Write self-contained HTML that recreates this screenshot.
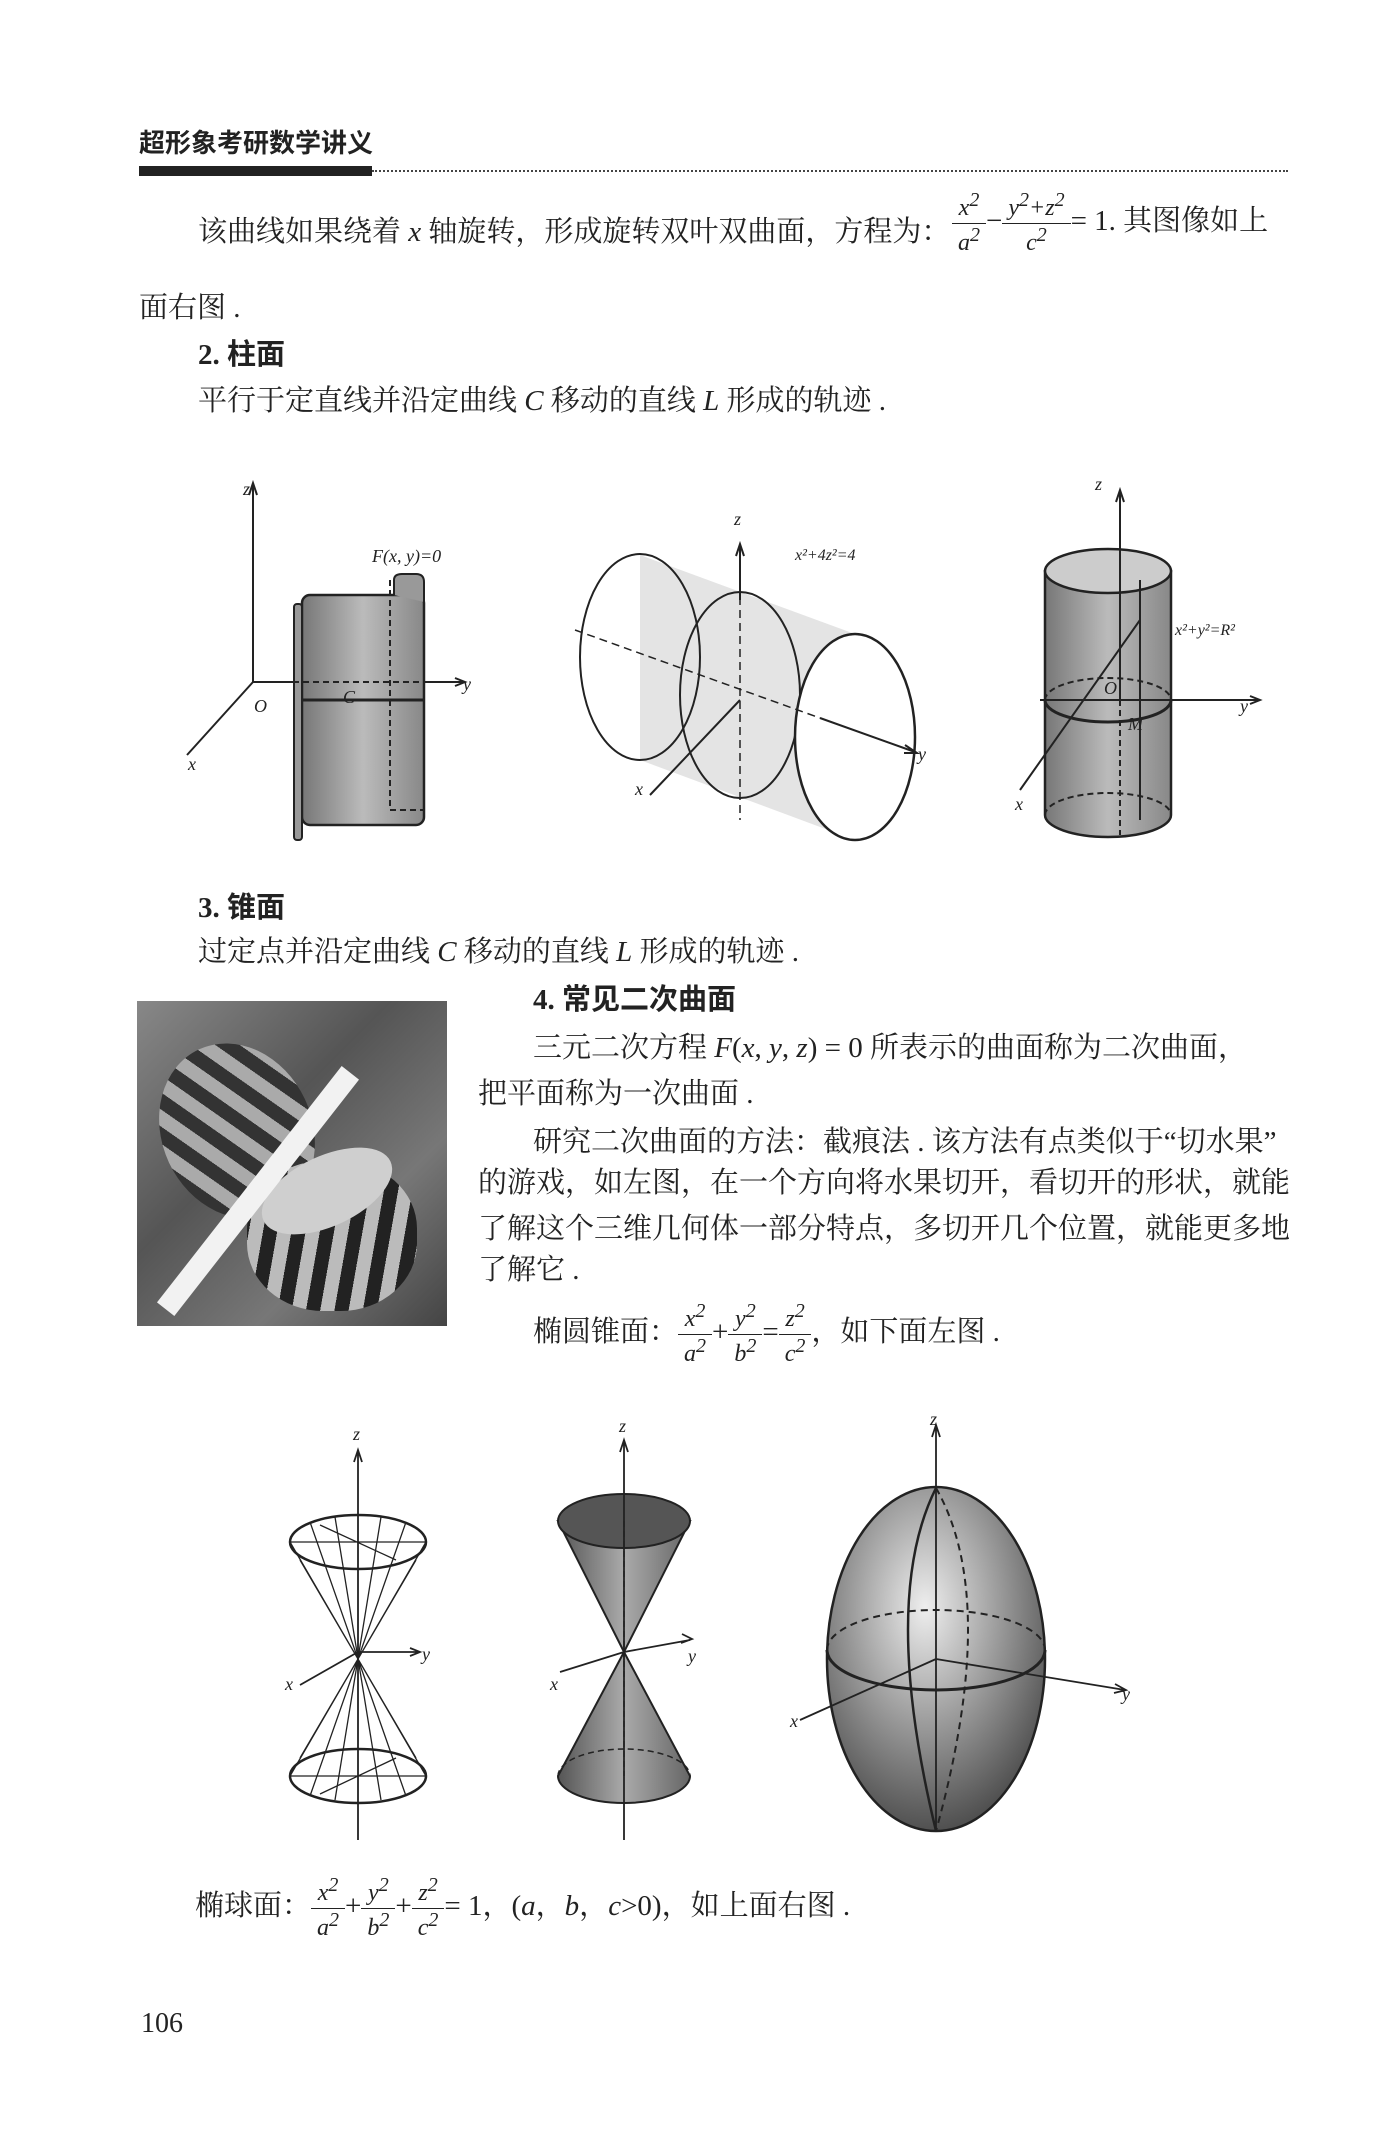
<!DOCTYPE html>
<html><head><meta charset="utf-8"><style>
body{margin:0;background:#fff;}
#p{position:relative;width:1399px;height:2152px;overflow:hidden;background:#fff;font-family:"Liberation Serif","Noto Serif CJK SC",serif;color:#222;}
.t{position:absolute;font-size:29px;white-space:nowrap;line-height:1;}
.b{font-weight:bold;font-family:"Liberation Serif","Noto Sans CJK SC",sans-serif;}
i{font-style:italic;}
.fr{display:inline-block;vertical-align:middle;text-align:center;font-size:24px;font-style:italic;line-height:1.15;}
.fr span{display:block;padding:0 6px;}
.fr .n{border-bottom:1.5px solid #222;}
svg{position:absolute;left:0;top:0;}
</style></head><body><div id="p">
<div class="t b" style="left:139px;top:131px;font-size:26px;">超形象考研数学讲义</div>
<div style="position:absolute;left:139px;top:166px;width:233px;height:10px;background:#222;"></div>
<div style="position:absolute;left:372px;top:170px;width:916px;border-top:2px dotted #444;"></div>

<div class="t" style="left:198px;top:218px;">该曲线如果绕着 <i>x</i> 轴旋转，形成旋转双叶双曲面，方程为：</div>
<div class="t" style="left:952px;top:189px;"><span class="fr"><span class="n">x<sup>2</sup></span><span>a<sup>2</sup></span></span>−<span class="fr"><span class="n">y<sup>2</sup>+z<sup>2</sup></span><span>c<sup>2</sup></span></span>= 1. 其图像如上</div>
<div class="t" style="left:139px;top:294px;">面右图 .</div>
<div class="t b" style="left:198px;top:341px;">2. 柱面</div>
<div class="t" style="left:198px;top:387px;">平行于定直线并沿定曲线 <i>C</i> 移动的直线 <i>L</i> 形成的轨迹 .</div>

<svg width="1399" height="2152" viewBox="0 0 1399 2152" font-family="Liberation Serif" font-style="italic" font-size="18" fill="none" stroke="#222">
<defs>
<linearGradient id="g1" x1="0" x2="1"><stop offset="0" stop-color="#777"/><stop offset=".5" stop-color="#bbb"/><stop offset="1" stop-color="#888"/></linearGradient>
<linearGradient id="g2" x1="0" x2="1"><stop offset="0" stop-color="#555"/><stop offset=".5" stop-color="#aaa"/><stop offset="1" stop-color="#666"/></linearGradient>
<radialGradient id="g3" cx=".45" cy=".35" r=".7"><stop offset="0" stop-color="#eee"/><stop offset=".5" stop-color="#999"/><stop offset="1" stop-color="#444"/></radialGradient>
</defs>
<path d="M253 682V485M249 495l4-12 4 12" stroke-width="2"/>
<path d="M253 682H465M455 678l10 4-10 4" stroke-width="2"/>
<path d="M253 682L187 755" stroke-width="2"/>
<rect x="302" y="595" width="122" height="230" rx="8" fill="url(#g1)" stroke-width="2.5"/>
<rect x="294" y="604" width="8" height="236" rx="3" fill="#999" stroke-width="2"/>
<path d="M394 595V580q0-6 8-6h14q8 0 8 8v20" fill="#999" stroke-width="2"/>
<path d="M302 700H424" stroke-width="3"/>
<path d="M390 580V810h34M253 682H424" stroke-dasharray="6 4" stroke-width="2"/>
<g fill="#222" stroke="none"><text x="243" y="495">z</text><text x="254" y="712">O</text><text x="343" y="703">C</text><text x="463" y="690">y</text><text x="188" y="770">x</text><text x="372" y="562">F(x, y)=0</text></g>
<path d="M640 555L855 634A61 103 0 0 1 855 840L640 760Z" fill="#ddd" stroke="none" opacity=".8"/>
<ellipse cx="640" cy="657" rx="60" ry="103" stroke-width="2"/>
<ellipse cx="740" cy="695" rx="60" ry="103" stroke-width="2"/>
<ellipse cx="855" cy="737" rx="60" ry="103" fill="#fff" stroke-width="2.5"/>
<path d="M740 545V820M575 630L820 718" stroke-dasharray="8 5" stroke-width="1.5"/>
<path d="M740 600V545M736 556l4-12 4 12M820 718L915 752M905 745l12 8-13 0M740 700L650 795" stroke-width="2"/>
<g fill="#222" stroke="none"><text x="734" y="525">z</text><text x="795" y="560" font-size="16">x²+4z²=4</text><text x="918" y="760">y</text><text x="635" y="795">x</text></g>
<path d="M1045 571V815A63 22 0 0 0 1171 815V571Z" fill="url(#g1)" stroke-width="2.5"/>
<ellipse cx="1108" cy="571" rx="63" ry="22" fill="#ccc" stroke-width="2.5"/>
<path d="M1120 700V490M1116 502l4-12 4 12M1040 700H1260M1250 696l10 4-10 4M1140 620L1020 790" stroke-width="2"/>
<path d="M1045 700A63 22 0 0 0 1171 700" stroke-width="3"/>
<path d="M1045 700A63 22 0 0 1 1171 700M1045 815A63 22 0 0 1 1171 815M1120 700V835" stroke-dasharray="6 4" stroke-width="2"/>
<path d="M1140 580V820" stroke-width="2"/>
<g fill="#222" stroke="none"><text x="1095" y="490">z</text><text x="1175" y="635" font-size="16">x²+y²=R²</text><text x="1240" y="712">y</text><text x="1104" y="694">O</text><text x="1128" y="730">M</text><text x="1015" y="810">x</text></g>
</svg>

<div class="t b" style="left:198px;top:894px;">3. 锥面</div>
<div class="t" style="left:198px;top:938px;">过定点并沿定曲线 <i>C</i> 移动的直线 <i>L</i> 形成的轨迹 .</div>

<div style="position:absolute;left:137px;top:1001px;width:310px;height:325px;background:linear-gradient(135deg,#888,#555 40%,#777 70%,#444);overflow:hidden;">
<div style="position:absolute;left:25px;top:40px;width:150px;height:180px;border-radius:50%;background:repeating-linear-gradient(60deg,#333 0 14px,#aaa 14px 28px);transform:rotate(-25deg);"></div>
<div style="position:absolute;left:110px;top:160px;width:170px;height:150px;border-radius:45%;background:repeating-linear-gradient(100deg,#222 0 14px,#bbb 14px 28px);"></div>
<div style="position:absolute;left:120px;top:155px;width:140px;height:70px;border-radius:50%;background:#cfcfcf;transform:rotate(-25deg);"></div>
<div style="position:absolute;left:110px;top:40px;width:22px;height:300px;background:#f2f2f2;transform:rotate(38deg);"></div>
</div>

<div class="t b" style="left:533px;top:986px;">4. 常见二次曲面</div>
<div class="t" style="left:533px;top:1034px;">三元二次方程 <i>F</i>(<i>x</i>, <i>y</i>, <i>z</i>) = 0 所表示的曲面称为二次曲面，</div>
<div class="t" style="left:478px;top:1080px;">把平面称为一次曲面 .</div>
<div class="t" style="left:533px;top:1128px;">研究二次曲面的方法：截痕法 . 该方法有点类似于“切水果”</div>
<div class="t" style="left:478px;top:1169px;">的游戏，如左图，在一个方向将水果切开，看切开的形状，就能</div>
<div class="t" style="left:478px;top:1215px;">了解这个三维几何体一部分特点，多切开几个位置，就能更多地</div>
<div class="t" style="left:478px;top:1256px;">了解它 .</div>
<div class="t" style="left:533px;top:1300px;">椭圆锥面：<span class="fr"><span class="n">x<sup>2</sup></span><span>a<sup>2</sup></span></span>+<span class="fr"><span class="n">y<sup>2</sup></span><span>b<sup>2</sup></span></span>=<span class="fr"><span class="n">z<sup>2</sup></span><span>c<sup>2</sup></span></span>，如下面左图 .</div>

<svg width="1399" height="2152" viewBox="0 0 1399 2152" font-family="Liberation Serif" font-style="italic" font-size="18" fill="none" stroke="#222">
<path d="M358 1450V1840M354 1462l4-12 4 12M358 1652H420M410 1648l10 4-10 4M358 1652L300 1685" stroke-width="1.8"/>
<ellipse cx="358" cy="1542" rx="68" ry="27" stroke-width="2.5"/>
<ellipse cx="358" cy="1776" rx="68" ry="27" stroke-width="2.5"/>
<path d="M290 1542L426 1776M426 1542L290 1776M310 1522L406 1796M406 1522L310 1796M335 1517L381 1800M381 1517L335 1800M300 1560L416 1758M416 1560L300 1758M290 1542H426M290 1776H426M320 1525L396 1560M320 1794L396 1758" stroke-width="1.3"/>
<g fill="#222" stroke="none"><text x="353" y="1440">z</text><text x="422" y="1660">y</text><text x="285" y="1690">x</text></g>
<path d="M558 1521L624 1652L690 1521Z" fill="url(#g2)" stroke-width="2"/>
<ellipse cx="624" cy="1521" rx="66" ry="27" fill="#555" stroke-width="2"/>
<path d="M624 1652L558 1776A66 27 0 0 0 690 1776Z" fill="url(#g2)" stroke-width="2"/>
<path d="M624 1440V1840M620 1452l4-12 4 12M624 1652L690 1640M682 1634l10 5-11 4M624 1652L560 1672" stroke-width="1.8"/>
<path d="M624 1521V1776M558 1776A66 27 0 0 1 690 1776" stroke-dasharray="6 4" stroke-width="1.5"/>
<g fill="#222" stroke="none"><text x="619" y="1432">z</text><text x="688" y="1662">y</text><text x="550" y="1690">x</text></g>
<ellipse cx="936" cy="1659" rx="109" ry="172" fill="url(#g3)" stroke-width="2.5"/>
<path d="M827 1650A109 40 0 0 0 1045 1650" stroke-width="3"/>
<path d="M827 1650A109 40 0 0 1 1045 1650" stroke-dasharray="7 5" stroke-width="2"/>
<path d="M936 1488Q880 1600 936 1831" stroke-width="2.5"/>
<path d="M936 1488Q1000 1600 936 1831" stroke-dasharray="7 5" stroke-width="2"/>
<path d="M936 1425V1831M932 1437l4-12 4 12M936 1659L1125 1690M1115 1684l11 6-12 3M936 1659L800 1720" stroke-width="1.8"/>
<g fill="#222" stroke="none"><text x="930" y="1425">z</text><text x="1122" y="1700">y</text><text x="790" y="1727">x</text></g>
</svg>

<div class="t" style="left:195px;top:1874px;">椭球面：<span class="fr"><span class="n">x<sup>2</sup></span><span>a<sup>2</sup></span></span>+<span class="fr"><span class="n">y<sup>2</sup></span><span>b<sup>2</sup></span></span>+<span class="fr"><span class="n">z<sup>2</sup></span><span>c<sup>2</sup></span></span>= 1，(<i>a</i>，<i>b</i>，<i>c</i>&gt;0)，如上面右图 .</div>
<div class="t" style="left:141px;top:2010px;font-size:28px;">106</div>
</div></body></html>
